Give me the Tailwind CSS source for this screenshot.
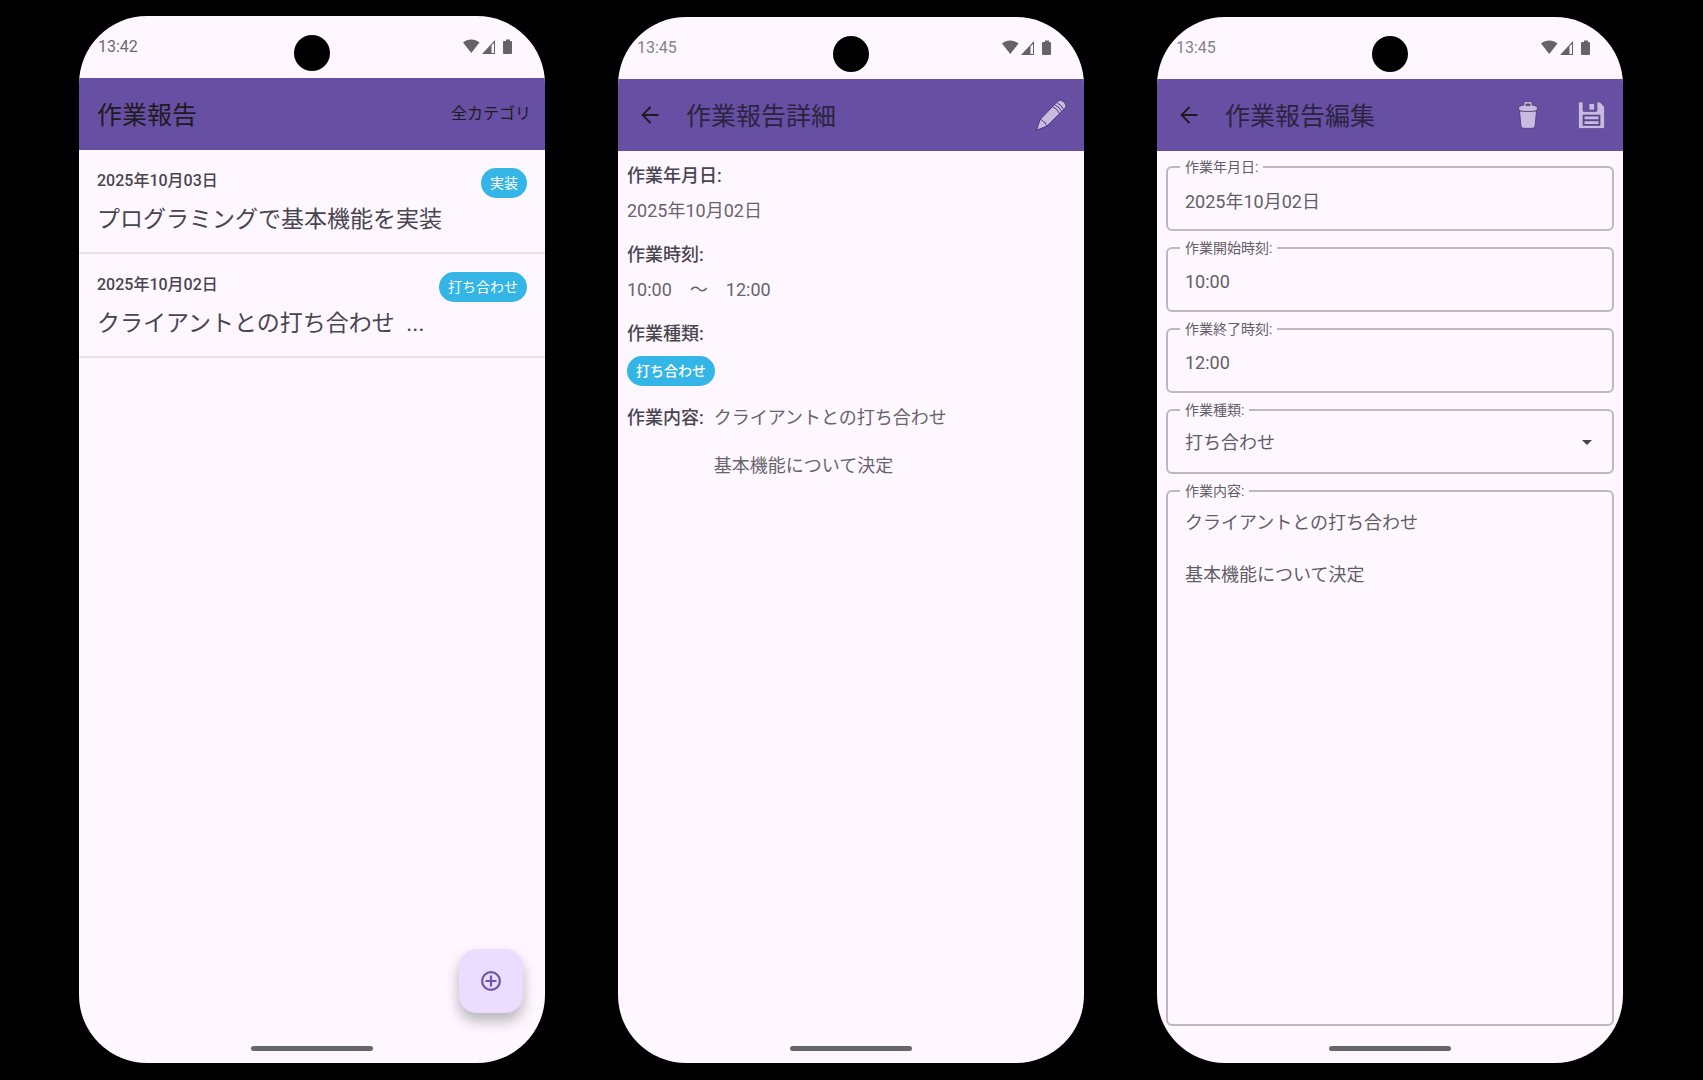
<!DOCTYPE html>
<html lang="ja">
<head>
<meta charset="utf-8">
<meta name="viewport" content="width=device-width, initial-scale=1">
<title>作業報告</title>
<script src="https://cdn.jsdelivr.net/npm/@tailwindcss/browser@4"></script>
</head>
<body class="bg-black font-['Roboto','Noto_Sans_CJK_JP',sans-serif] text-[#49454f]">
<svg class="hidden" aria-hidden="true">
  <symbol id="status" viewBox="0 0 50 16">
    <path d="M0 3.6C4.5-.6 12-.6 16.500 3.600L8.250 14Z" fill="#666368"/>
    <path d="M19 15 32 1v14Z" fill="#666368"/>
    <path d="M28.500 6.600 31 4v10h-2.500Z" fill="#fef7ff"/>
    <path d="M41 2h2V.500h4V2h1q1 0 1 1v11q0 1-1 1h-7q-1 0-1-1V3q0-1 1-1Z" fill="#666368"/>
  </symbol>
  <symbol id="back" viewBox="0 0 18 18">
    <path d="M17.500 9H1.500M9.500 1 1.500 9l8 8" fill="none" stroke="#1d1b20" stroke-width="1.800"/>
  </symbol>
</svg>
<div class="grid min-h-screen grid-cols-3 gap-[73px] pt-4 pr-20 pb-[17px] pl-[79px]">

  <!-- Report list -->
  <section class="relative flex flex-col overflow-hidden rounded-[68px] bg-[#fef7ff]">
    <div class="relative flex h-[62px] items-center justify-between pr-8 pl-[19px]">
      <span class="text-base leading-5 text-[#6c696e]">13:42</span>
      <span class="absolute top-[19px] left-1/2 size-9 -translate-x-1/2 rounded-full bg-black"></span>
      <svg class="h-4 w-[50px]"><use href="#status"/></svg>
    </div>
    <header class="flex h-[72px] items-center justify-between bg-[#674fa3] pr-[14px] pl-[18px] text-[#1d1b20]">
      <h1 class="pt-[3px] text-[25px] leading-9">作業報告</h1>
      <button class="text-base">全カテゴリ</button>
    </header>
    <ul class="flex-1">
      <li class="flex h-[104px] items-start justify-between border-b-2 border-[#e6e0e8] px-[18px] pt-[18px]">
        <div>
          <p class="text-base leading-[26px] font-medium">2025年10月03日</p>
          <p class="text-[23px] leading-[52px]">プログラミングで基本機能を実装</p>
        </div>
        <span class="rounded-full bg-[#33b5e5] px-[9px] text-sm leading-[30px] text-white">実装</span>
      </li>
      <li class="flex h-[104px] items-start justify-between border-b-2 border-[#e6e0e8] px-[18px] pt-[18px]">
        <div>
          <p class="text-base leading-[26px] font-medium">2025年10月02日</p>
          <p class="text-[23px] leading-[52px]">クライアントとの打ち合わせ&nbsp; ...</p>
        </div>
        <span class="rounded-full bg-[#33b5e5] px-[9px] text-sm leading-[30px] text-white">打ち合わせ</span>
      </li>
    </ul>
    <button aria-label="追加" class="absolute right-[22px] bottom-[50px] flex size-16 items-center justify-center rounded-[18px] bg-[#eaddff] shadow-[0_8px_14px_rgba(0,0,0,0.28)]">
      <svg class="size-5" viewBox="0 0 20 20" fill="none" stroke="#6f55a5" stroke-width="2.2"><circle cx="10" cy="10" r="8.900"/><path d="M10 4.500v11M4.500 10h11"/></svg>
    </button>
    <div class="flex h-[37px] justify-center pt-5"><span class="h-[5px] w-[122px] rounded-full bg-[#68656a]"></span></div>
  </section>

  <!-- Report detail -->
  <section class="mt-px flex flex-col overflow-hidden rounded-[68px] bg-[#fef7ff]">
    <div class="relative flex h-[62px] items-center justify-between pr-8 pl-[19px]">
      <span class="text-base leading-5 text-[#858287]">13:45</span>
      <span class="absolute top-[19px] left-1/2 size-9 -translate-x-1/2 rounded-full bg-black"></span>
      <svg class="h-4 w-[50px]"><use href="#status"/></svg>
    </div>
    <header class="flex h-[72px] items-center bg-[#674fa3] pr-[17px] pl-[23px] text-[#2b2440]">
      <button aria-label="戻る" class="mr-[27px]"><svg class="size-[18px]"><use href="#back"/></svg></button>
      <h1 class="flex-1 pt-[3px] text-[25px] leading-9">作業報告詳細</h1>
      <button aria-label="編集">
        <svg class="size-8" viewBox="0 0 32 32" fill="#c9badf" stroke="#4b3b78" stroke-width="1" stroke-linejoin="round" stroke-linecap="round">
          <path d="M1.500 31 5 20.500 22.500 2.500Q25-.200 28.200 2.400L30 4.200Q32.200 6.800 30 9.400L12 27Z"/>
          <path d="M5 20.500Q6.500 20.500 7.500 21.500 8 23 10 23.500 10.500 26 12 27M17.500 7.500Q22.500 9.500 24.700 14.800M19.500 5.500Q24.500 7.500 26.800 12.600M21.500 3.500Q26.500 5.500 28.800 10.600" fill="none"/>
        </svg>
      </button>
    </header>
    <dl class="flex flex-1 flex-col px-[9px] pt-[7px] text-lg leading-[35px]">
      <dt class="font-medium">作業年月日:</dt>
      <dd class="mb-[9px] text-[#68646d]">2025年10月02日</dd>
      <dt class="font-medium">作業時刻:</dt>
      <dd class="mb-[9px] text-[#68646d]">10:00　〜　12:00</dd>
      <dt class="font-medium">作業種類:</dt>
      <dd class="mt-[5px] mb-5 flex"><span class="rounded-full bg-[#33b5e5] px-[9px] text-sm leading-[30px] font-medium text-white">打ち合わせ</span></dd>
      <div class="flex gap-[10px] leading-6">
        <dt class="font-medium">作業内容:</dt>
        <dd class="text-[#68646d]">クライアントとの打ち合わせ<br><br>基本機能について決定</dd>
      </div>
    </dl>
    <div class="flex h-[37px] justify-center pt-5"><span class="h-[5px] w-[122px] rounded-full bg-[#68656a]"></span></div>
  </section>

  <!-- Report editor -->
  <section class="mt-px flex flex-col overflow-hidden rounded-[68px] bg-[#fef7ff]">
    <div class="relative flex h-[62px] items-center justify-between pr-8 pl-[19px]">
      <span class="text-base leading-5 text-[#858287]">13:45</span>
      <span class="absolute top-[19px] left-1/2 size-9 -translate-x-1/2 rounded-full bg-black"></span>
      <svg class="h-4 w-[50px]"><use href="#status"/></svg>
    </div>
    <header class="flex h-[72px] items-center bg-[#674fa3] pr-[18px] pl-[23px] text-[#2b2440]">
      <button aria-label="戻る" class="mr-[27px]"><svg class="size-[18px]"><use href="#back"/></svg></button>
      <h1 class="flex-1 pt-[3px] text-[25px] leading-9">作業報告編集</h1>
      <button aria-label="削除" class="mr-10">
        <svg class="h-7 w-5" viewBox="0 0 20 28" fill="#c9badf" stroke="#4b3b78" stroke-width=".8">
          <path d="M1.500 10h17L17 25q-.3 2.300-2.700 2.300H5.700Q3.300 27.300 3 25Z"/>
          <path d="M6 4V1.500Q6 .500 7 .500h6q1 0 1 1V4q5.500.500 5.500 4 0 2.500-9.500 2.500T.500 8Q.500 4.500 6 4Z"/>
          <path d="M8 3h4v1.500H8Z" fill="#674fa3"/>
        </svg>
      </button>
      <button aria-label="保存">
        <svg class="h-7 w-[27px]" viewBox="0 0 27 28" fill="#c9badf" stroke="#5a4790" stroke-width=".7">
          <path d="M1.500 1H5v8.500q0 1 1 1h12q1 0 1-1V1H22l4.500 5v20.500q0 1-1 1h-24q-1 0-1-1V2q0-1 1-1Z"/>
          <path d="M11 2.500h5.500v6.500H11Z"/>
          <path d="M5 14h17v10.500H5Z" fill="#5b4690"/>
          <path d="M6.500 15.500h14v2.800h-14ZM6.500 20.200h14v2.800h-14Z" stroke="none"/>
        </svg>
      </button>
    </header>
    <form class="flex flex-1 flex-col gap-2 px-[9px] pt-[7px] text-lg text-[#625e67]">
      <fieldset class="h-[73px] min-w-0 rounded-md border-2 border-[#bdb7bf] px-3">
        <legend class="px-[5px] text-sm leading-[18px]"><label for="date">作業年月日:</label></legend>
        <input id="date" type="text" value="2025年10月02日" class="block h-12 w-full bg-transparent px-[5px] outline-none">
      </fieldset>
      <fieldset class="h-[73px] min-w-0 rounded-md border-2 border-[#bdb7bf] px-3">
        <legend class="px-[5px] text-sm leading-[18px]"><label for="start">作業開始時刻:</label></legend>
        <input id="start" type="text" value="10:00" class="block h-12 w-full bg-transparent px-[5px] outline-none">
      </fieldset>
      <fieldset class="h-[73px] min-w-0 rounded-md border-2 border-[#bdb7bf] px-3">
        <legend class="px-[5px] text-sm leading-[18px]"><label for="end">作業終了時刻:</label></legend>
        <input id="end" type="text" value="12:00" class="block h-12 w-full bg-transparent px-[5px] outline-none">
      </fieldset>
      <fieldset class="h-[73px] min-w-0 rounded-md border-2 border-[#bdb7bf] px-3">
        <legend class="px-[5px] text-sm leading-[18px]"><label for="kind">作業種類:</label></legend>
        <div class="relative">
          <select id="kind" class="block h-12 w-full appearance-none bg-transparent px-[5px] outline-none"><option>打ち合わせ</option><option>実装</option></select>
          <svg class="pointer-events-none absolute top-[21px] right-2 h-[5px] w-[10px]" viewBox="0 0 10 5"><path d="M0 0h10L5 5Z" fill="#49454f"/></svg>
        </div>
      </fieldset>
      <fieldset class="flex min-w-0 flex-1 flex-col rounded-md border-2 border-[#bdb7bf] px-3">
        <legend class="px-[5px] text-sm leading-[18px]"><label for="body">作業内容:</label></legend>
        <textarea id="body" class="block w-full flex-1 resize-none bg-transparent px-[5px] pt-[10px] leading-[26px] outline-none">クライアントとの打ち合わせ

基本機能について決定</textarea>
      </fieldset>
    </form>
    <div class="flex h-[37px] justify-center pt-5"><span class="h-[5px] w-[122px] rounded-full bg-[#68656a]"></span></div>
  </section>
</div>
</body>
</html>
